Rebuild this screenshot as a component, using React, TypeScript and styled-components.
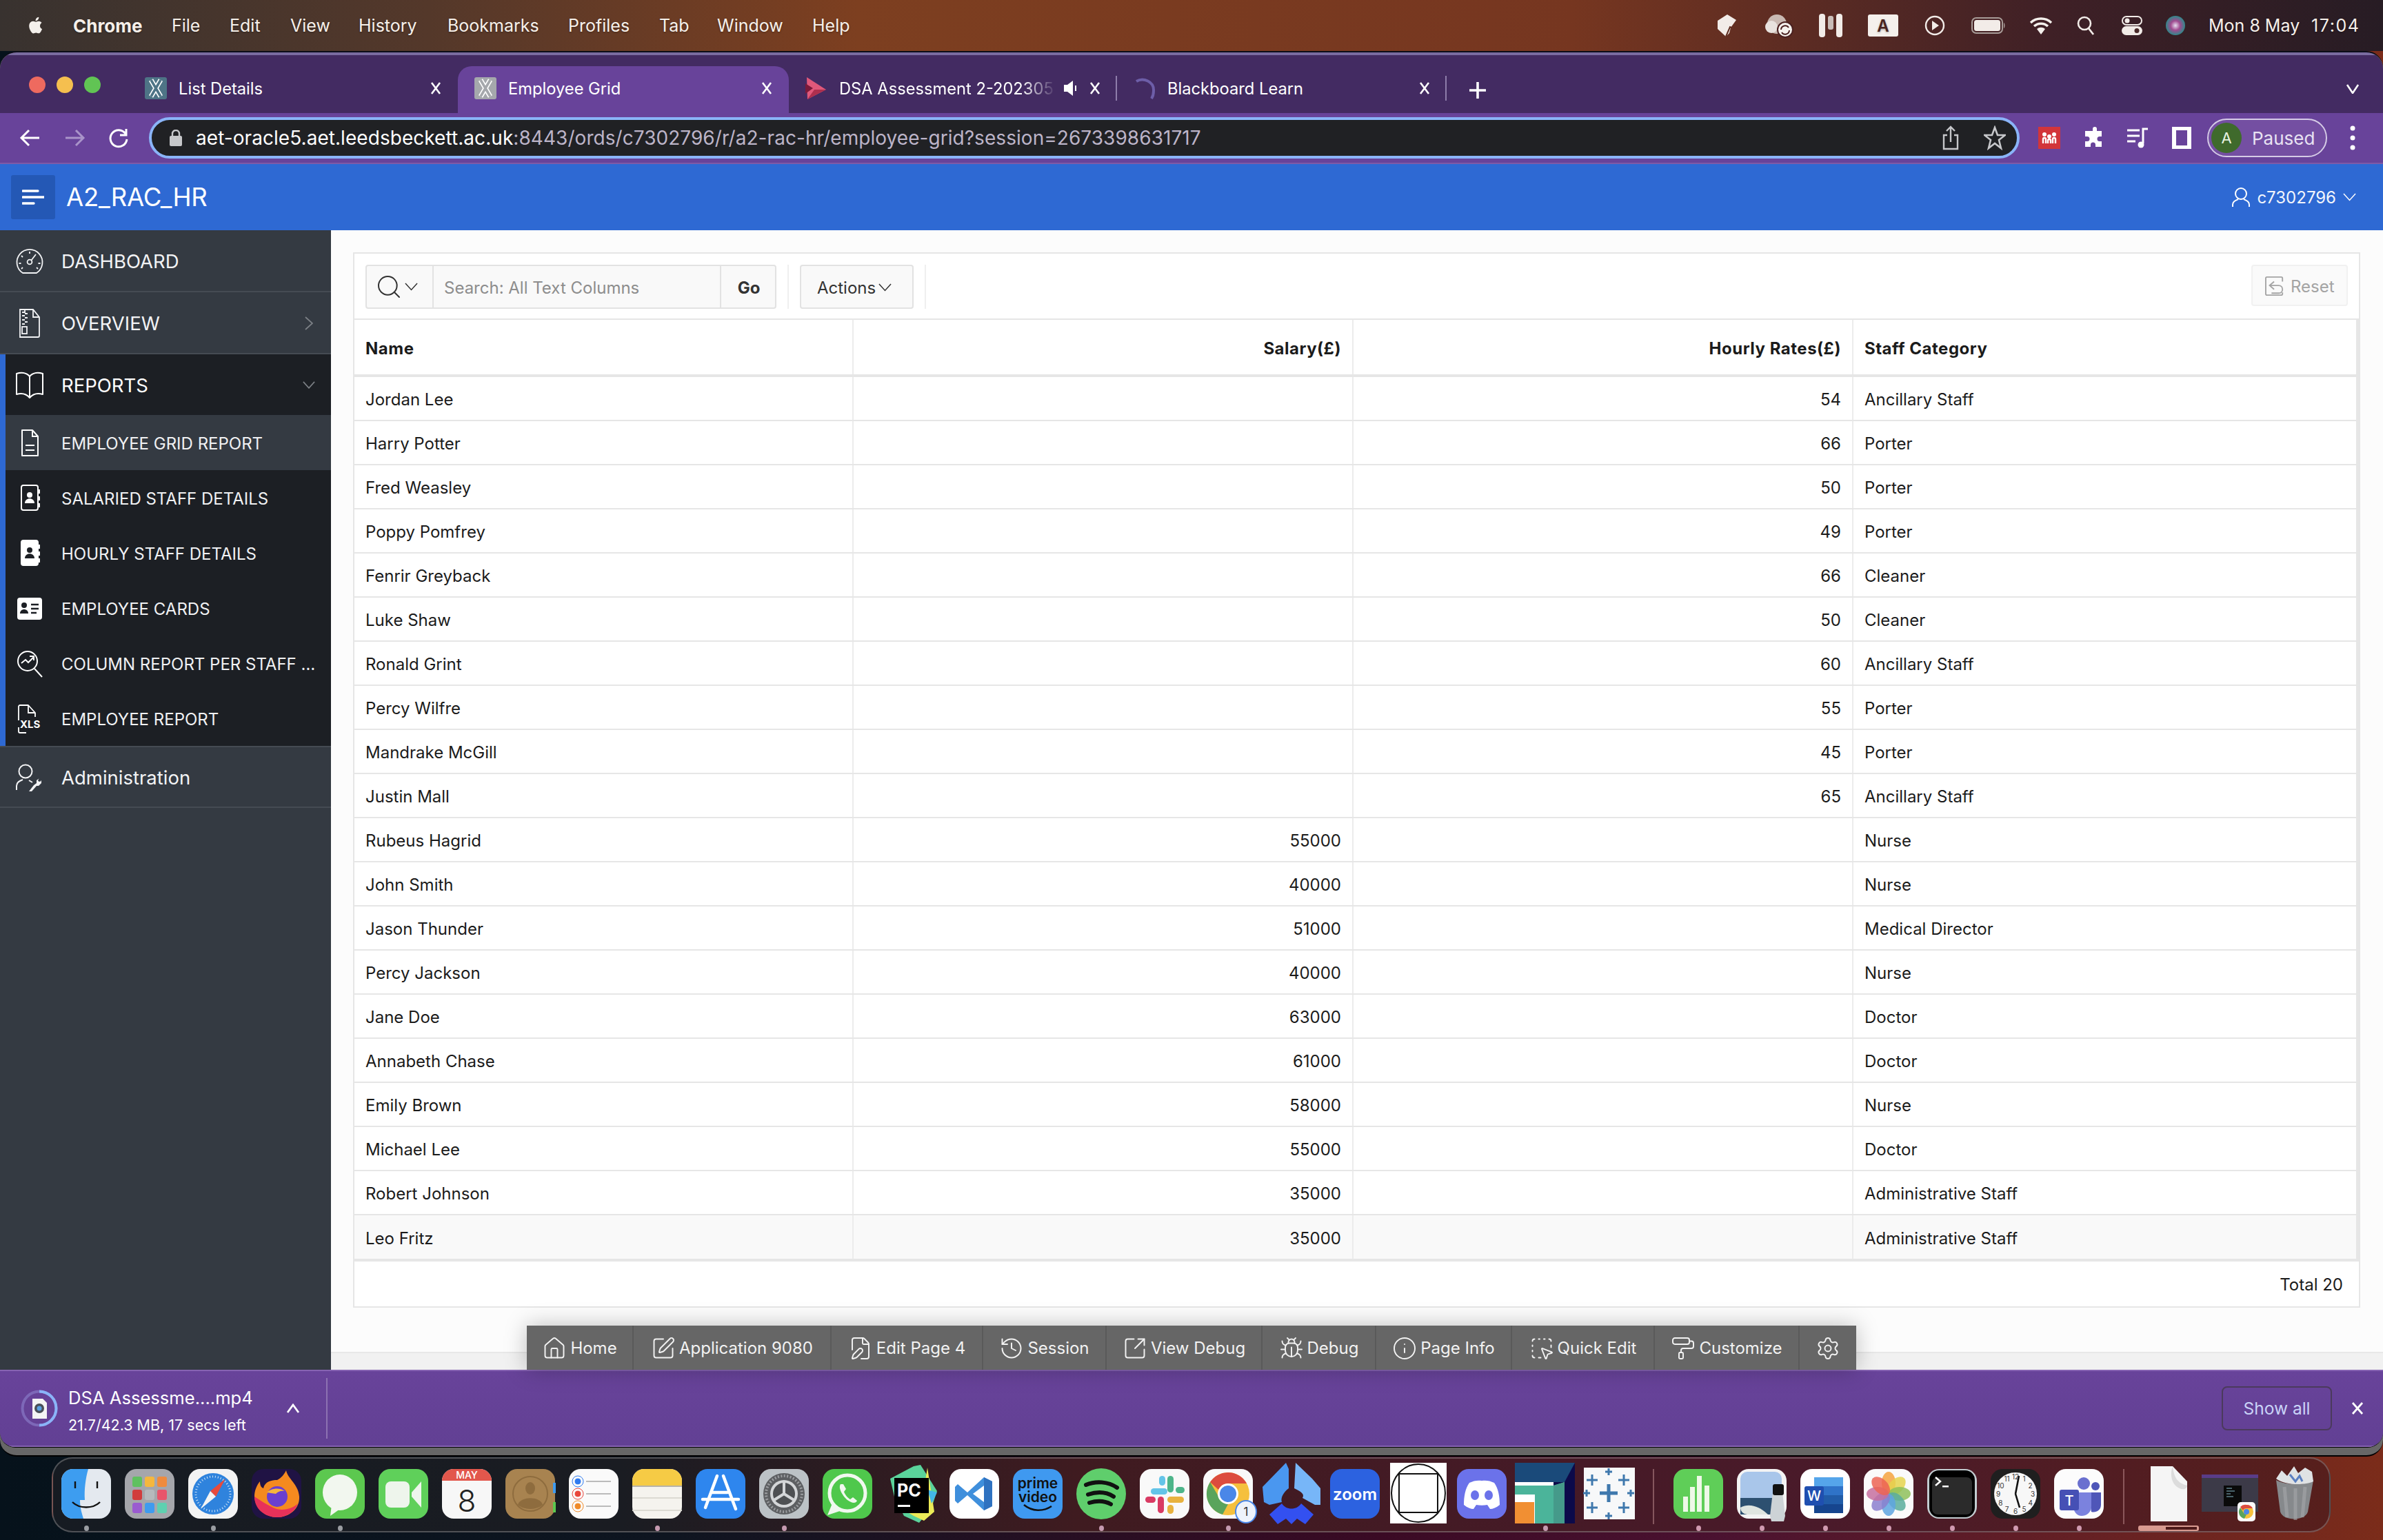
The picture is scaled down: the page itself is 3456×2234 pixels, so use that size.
import React from "react";
import styled, { createGlobalStyle } from "styled-components";
import {
  Home, SquarePen, FilePen, History, SquareArrowOutUpRight, Bug, Info,
  SquareDashedMousePointer, PaintRoller, Settings, Search,
} from "lucide-react";

const Global = createGlobalStyle`
  html, body { margin: 0; padding: 0; width: 3456px; height: 2234px; overflow: hidden; }
  body { font-family: Inter, "Liberation Sans", sans-serif; }
  * { box-sizing: border-box; }
`;

const Screen = styled.div`
  width: 3456px; height: 2234px; display: flex; flex-direction: column; overflow: hidden;
  background: linear-gradient(90deg, #06121b 0%, #0e1520 28%, #3a0a24 58%, #4a1230 72%, #7b2c1a 100%);
`;

/* ---------- menu bar ---------- */
const MenuBar = styled.div`
  height: 74px; flex: none; display: flex; align-items: center; color: #f6f0ea; font-size: 25px;
  padding-left: 38px; text-shadow: 0 1px 3px rgba(0,0,0,.35);
  background: linear-gradient(90deg, #38322f 0%, #54382a 18%, #7d3f20 36%, #763620 66%, #3f2026 86%, #271c24 100%);
`;
const MenuLabel = styled.span<{ $w: number; $bold?: boolean }>`
  width: ${p => p.$w}px; flex: none; font-weight: ${p => (p.$bold ? 700 : 400)}; white-space: nowrap;
  font-size: ${p => (p.$bold ? 26 : 25)}px;
`;
const Apple = styled.svg`width: 28px; height: 32px; margin-right: 40px; flex: none;`;
const MenuSpacer = styled.div`flex: 1;`;
const StatusCell = styled.div<{ $w: number }>`
  width: ${p => p.$w}px; flex: none; display: flex; justify-content: center; align-items: center;
`;
const Clock = styled.span<{ $w: number; $wide?: boolean }>`
  width: ${p => p.$w}px; flex: none; font-size: 25px; white-space: nowrap;
  ${p => p.$wide && `letter-spacing: 1.6px;`}
  ${p => !p.$wide && `margin-left: 22px;`}
`;

/* ---------- browser window ---------- */
const Shell = styled.div`
  height: 2039px; flex: none; background: #676767; border-radius: 24px;
  border-top: 2px solid #0b0d18; border-bottom: 2px solid #000; overflow: hidden;
`;
const Chrome = styled.div`
  height: 2024px; display: flex; flex-direction: column; border-radius: 24px 24px 22px 22px; overflow: hidden;
  border-bottom: 1px solid #000;
`;
const TabStrip = styled.div`
  height: 88px; flex: none; background: #432b62; border-top: 4px solid #7a6ca0; display: flex; align-items: flex-end;
  padding-left: 186px; position: relative; color: #fff; font-size: 23.7px;
`;
const Lights = styled.div`
  position: absolute; left: 42px; top: 31px; display: flex; gap: 16px;
`;
const Light = styled.span<{ $c: string }>`width: 24px; height: 24px; border-radius: 50%; background: ${p => p.$c};`;
const Tab = styled.div<{ $w: number; $active?: boolean; $sep?: boolean }>`
  width: ${p => p.$w}px; height: 68px; flex: none; display: flex; align-items: center; padding: 0 24px 4px;
  position: relative; border-radius: 20px 20px 0 0;
  background: ${p => (p.$active ? "#68439a" : "transparent")};
  ${p => p.$sep && `
    &::after { content: ""; position: absolute; right: 0; top: 14px; height: 36px; width: 2px; background: #8e7daa; }`}
`;
const TabIcon = styled.svg`width: 32px; height: 32px; flex: none; margin-right: 17px;`;
const TabTitle = styled.span<{ $fade?: boolean }>`
  flex: 1; white-space: nowrap; overflow: hidden; min-width: 0;
  ${p => p.$fade && `-webkit-mask-image: linear-gradient(90deg, #000 84%, transparent 100%); margin-right: 10px;`}
`;
const TabX = styled.svg`width: 16px; height: 18px; flex: none; margin-left: 16px;`;
const Plus = styled.svg`width: 26px; height: 26px; margin: 0 0 20px 32px;`;
const StripEnd = styled.svg`width: 20px; height: 14px; position: absolute; right: 34px; top: 42px;`;

const Toolbar = styled.div`
  height: 74px; flex: none; background: #68439a; border-bottom: 2px solid #7d5ba8; display: flex; align-items: center;
  padding-left: 28px; color: #fff;
`;
const NavBtn = styled.svg`width: 32px; height: 32px; margin-right: 32px; flex: none;`;
const UrlBar = styled.div`
  width: 2713px; height: 60px; flex: none; margin-left: -4px; border: 4px solid #8ab4f8; border-radius: 30px; background: #202124;
  display: flex; align-items: center; padding: 0 16px 0 26px; font-size: 28px; color: #bcb4c8; letter-spacing: .05px;
`;
const UrlHost = styled.span`color: #fff;`;
const UrlText = styled.div`flex: 1; margin-left: 20px; white-space: nowrap;`;
const UrlIcon = styled.svg`width: 32px; height: 36px; flex: none; margin-left: 32px;`;
const Ext = styled.svg`flex: none; width: 32px; height: 32px;`;
const ExtRow = styled.div`display: flex; align-items: center; gap: 32px; margin-left: 27px; flex: none;`;
const Paused = styled.div`
  width: 174px; height: 56px; flex: none; margin-left: 21px; border: 2px solid #d5cbe6; border-radius: 28px; background: #744fa2;
  display: flex; align-items: center; padding-left: 4px; gap: 15px; font-size: 26px; color: #e8e2f2;
`;
const Avatar = styled.span`
  width: 44px; height: 44px; border-radius: 50%; background: #3f6a2c; color: #e8f2e0; font-size: 22px;
  display: flex; align-items: center; justify-content: center;
`;
const Kebab = styled.svg`width: 10px; height: 36px; margin-left: 32px; flex: none;`;

/* ---------- APEX header ---------- */
const AppHeader = styled.div`
  height: 96px; flex: none; background: #2e69d3; display: flex; align-items: center; padding: 0 39px 0 16px; color: #fff;
`;
const MenuBtn = styled.div`
  width: 64px; height: 64px; background: #2458b5; border-radius: 3px; display: flex; align-items: center; justify-content: center;
`;
const AppTitle = styled.div`font-size: 36.5px; margin-left: 16px; flex: 1; letter-spacing: -.2px;`;
const UserBox = styled.div`display: flex; align-items: center; font-size: 24px; gap: 10px; color: #f1f5fc;`;

/* ---------- chevrons ---------- */
const ChevDown = styled.svg<{ $w?: number }>`width: ${p => p.$w ?? 20}px; height: ${p => ((p.$w ?? 20) * 12) / 20}px; flex: none;`;
const ChevRight = styled.svg`width: 12px; height: 20px; flex: none;`;
const Down = ({ w, c = "currentColor", sw = 1.6 }: { w?: number; c?: string; sw?: number }) => (
  <ChevDown $w={w} viewBox="0 0 20 12"><path d="M1 1l9 10 9-10" fill="none" stroke={c} strokeWidth={sw} /></ChevDown>
);

/* ---------- body ---------- */
const Body = styled.div`flex: 1; display: flex; min-height: 0; position: relative;`;
const Sidebar = styled.div`width: 480px; flex: none; background: #343a42; display: flex; flex-direction: column;`;
const NavTop = styled.div<{ $h?: number; $top?: boolean }>`
  height: ${p => p.$h ?? 90}px; flex: none; display: flex; align-items: center; padding: 1px 26px 0 22px;
  color: #f2f3f5; font-size: 27.5px; border-bottom: 2px solid #454b53;
  ${p => p.$top && `border-top: 2px solid #454b53;`}
`;
const NavGroup = styled.div`background: #1c1f24; border-left: 8px solid #2e69d3; display: flex; flex-direction: column;`;
const NavHead = styled.div`
  height: 88px; display: flex; align-items: center; padding: 1px 23px 0 14px; color: #fff; font-size: 27.5px;
`;
const NavSub = styled.div<{ $on?: boolean }>`
  height: 80px; display: flex; align-items: center; padding: 2px 0 0 14px; font-size: 24px; color: #f0f1f3; white-space: nowrap;
  background: ${p => (p.$on ? "#343a42" : "transparent")};
`;
const NavIcon = styled.svg`width: 42px; height: 42px; flex: none; margin-right: 25px;`;
const NavLabel = styled.span`flex: 1;`;

const Main = styled.div`flex: 1; background: #fcfcfc; display: flex; flex-direction: column; padding-top: 32px; min-width: 0;`;
const Grid = styled.div`
  margin: 0 33px 0 32px; background: #fff; border: 2px solid #e6e6e6; flex: none; display: flex; flex-direction: column;
`;
const GridBar = styled.div`
  height: 96px; flex: none; display: flex; align-items: flex-start; padding: 16px 16px 0 16px; border-bottom: 2px solid #e6e6e6;
`;
const SearchGroup = styled.div`
  width: 596px; height: 64px; display: flex; background: #f9f9f9; border: 2px solid #e2e2e2; border-radius: 4px; font-size: 24px;
`;
const SearchBtn = styled.div`
  width: 97px; flex: none; border-right: 2px solid #e2e2e2; display: flex; align-items: center; padding-left: 12px; gap: 3px; color: #333;
`;
const SearchHint = styled.div`flex: 1; display: flex; align-items: center; padding: 2px 0 0 15px; color: #8d8d8d;`;
const GoBtn = styled.div`
  width: 80px; flex: none; border-left: 2px solid #e2e2e2; display: flex; align-items: center; justify-content: center; padding: 2px 0 0 2px; font-weight: 700; color: #333;
`;
const BarSep = styled.div`width: 2px; height: 64px; background: #efefef; flex: none; margin: 0 16px;`;
const ActionsBtn = styled.div`
  width: 165px; height: 64px; flex: none; background: #f9f9f9; border: 2px solid #e2e2e2; border-radius: 4px; font-size: 24px; color: #333;
  display: flex; align-items: center; padding: 2px 0 0 23px; gap: 4px;
`;
const BarSpacer = styled.div`flex: 1;`;
const ResetBtn = styled.div`
  width: 140px; height: 60px; flex: none; background: #fafafa; border: 2px solid #f1f1f1; border-radius: 4px; font-size: 24px; color: #a4a4a4;
  display: flex; align-items: center; padding: 2px 0 0 18px; gap: 9px;
`;
const ResetIcon = styled.svg`width: 28px; height: 28px; flex: none;`;
const Table = styled.div`border-right: 4px solid #e6e6e6; display: flex; flex-direction: column;`;
const Row = styled.div<{ $head?: boolean; $last?: boolean }>`
  display: grid; grid-template-columns: 724px 725px 725px 1fr; flex: none;
  height: ${p => (p.$head ? 83 : p.$last ? 67 : 64)}px;
  border-bottom: ${p => (p.$head || p.$last ? 4 : 2)}px solid #e6e6e6;
  background: ${p => (p.$last ? "#f9f9f9" : "#fff")};
  font-size: 24px; color: #1b1b1b; font-weight: ${p => (p.$head ? 700 : 400)};
  letter-spacing: ${p => (p.$head ? ".5px" : "0")};
`;
const Cell = styled.div<{ $right?: boolean; $end?: boolean }>`
  display: flex; align-items: center; padding: 3px 16px 0 16px; justify-content: ${p => (p.$right ? "flex-end" : "flex-start")};
  ${p => !p.$end && `border-right: 2px solid #ececec;`}
`;
const GridFooter = styled.div`
  height: 65px; flex: none; display: flex; align-items: center; justify-content: flex-end; padding: 2px 23px 0 0; font-size: 24px; color: #1b1b1b;
`;
const MainSpacer = styled.div`flex: 1;`;
const PageFoot = styled.div`height: 26px; flex: none; background: #f1f1f1; border-top: 2px solid #e8e8e8;`;

const DevBar = styled.div`
  position: absolute; left: 764px; bottom: 0; height: 64px; display: flex; background: #666; color: #f2f2f2; font-size: 24px;
  box-shadow: 0 0 32px rgba(0,0,0,.25);
`;
const DevItem = styled.div<{ $w: number }>`
  width: ${p => p.$w}px; flex: none; display: flex; align-items: center; justify-content: center; gap: 5px; padding-top: 1px;
  border-right: 2px solid #5a5a5a; white-space: nowrap;
  &:last-child { border-right: 0; }
`;

/* ---------- download shelf ---------- */
const Shelf = styled.div`
  height: 112px; flex: none; display: flex; align-items: center; color: #fff; padding-left: 30px; padding-right: 28px;
  background: linear-gradient(180deg, #68439a 0%, #624094 100%); border-top: 2px solid #8663b2; border-bottom: 2px solid #8663b2;
`;
const Ring = styled.svg`width: 54px; height: 54px; flex: none; margin-right: 15px;`;
const FileBox = styled.div`width: 290px; flex: none; display: flex; flex-direction: column; gap: 10px; padding-top: 5px;`;
const FileName = styled.div`font-size: 25.6px; line-height: 32px;`;
const FileInfo = styled.div`font-size: 21.5px; line-height: 26px;`;
const Caret = styled.svg`width: 20px; height: 14px; flex: none; margin-left: 26px;`;
const ShelfSep = styled.div`width: 2px; height: 88px; flex: none; background: #8d72b2; margin-left: 38px;`;
const ShelfSpacer = styled.div`flex: 1;`;
const ShowAll = styled.div`
  width: 160px; height: 64px; flex: none; border: 2px solid #4b3a5c; border-radius: 8px; display: flex; align-items: center; justify-content: center;
  font-size: 24.5px; color: #c9d3f7;
`;
const ShelfX = styled.svg`width: 18px; height: 20px; flex: none; margin-left: 28px;`;

/* ---------- dock ---------- */
const Dock = styled.div`
  width: 3305px; height: 109px; flex: none; margin: 1px 0 0 75px; border: 2px solid rgba(170,170,170,.38); border-radius: 30px;
  display: flex; padding: 5px 2px 0;
  background: linear-gradient(90deg, #161b22 0%, #1a1c22 25%, #3f1b20 45%, #451a26 65%, #4a1a2a 78%, #571f1c 100%);
`;
const DockCell = styled.div`width: 92px; flex: none; display: flex; flex-direction: column; align-items: center;`;
const DockArt = styled.svg`width: 92px; height: 92px; flex: none; overflow: visible;`;
const Dot = styled.span<{ $on?: boolean; $tone?: string }>`
  width: 7px; height: 8px; border-radius: 50%; background: ${p => (p.$on ? p.$tone ?? "#9a9da2" : "transparent")}; flex: none;
`;
const DockSep = styled.div`width: 2px; height: 80px; flex: none; margin: 10px 18px 0; background: rgba(220,170,170,.42);`;
const DocBar = styled.div`
  width: 88px; height: 8px; border-radius: 3px; background: #d89a90; display: flex; justify-content: flex-end; padding: 2px 3px 2px 40px; flex: none;
`;
const DocBarFill = styled.span`flex: 1; background: #4e1a1a;`;

/* ---------- data ---------- */
const MENU: [string, number, boolean?][] = [
  ["Chrome", 143, true], ["File", 84], ["Edit", 88], ["View", 99], ["History", 129], ["Bookmarks", 175],
  ["Profiles", 132], ["Tab", 84], ["Window", 138], ["Help", 80],
];

const ROWS: [string, string, string, string][] = [
  ["Jordan Lee", "", "54", "Ancillary Staff"],
  ["Harry Potter", "", "66", "Porter"],
  ["Fred Weasley", "", "50", "Porter"],
  ["Poppy Pomfrey", "", "49", "Porter"],
  ["Fenrir Greyback", "", "66", "Cleaner"],
  ["Luke Shaw", "", "50", "Cleaner"],
  ["Ronald Grint", "", "60", "Ancillary Staff"],
  ["Percy Wilfre", "", "55", "Porter"],
  ["Mandrake McGill", "", "45", "Porter"],
  ["Justin Mall", "", "65", "Ancillary Staff"],
  ["Rubeus Hagrid", "55000", "", "Nurse"],
  ["John Smith", "40000", "", "Nurse"],
  ["Jason Thunder", "51000", "", "Medical Director"],
  ["Percy Jackson", "40000", "", "Nurse"],
  ["Jane Doe", "63000", "", "Doctor"],
  ["Annabeth Chase", "61000", "", "Doctor"],
  ["Emily Brown", "58000", "", "Nurse"],
  ["Michael Lee", "55000", "", "Doctor"],
  ["Robert Johnson", "35000", "", "Administrative Staff"],
  ["Leo Fritz", "35000", "", "Administrative Staff"],
];

const DEV: [React.ElementType, string, number][] = [
  [Home, "Home", 155], [SquarePen, "Application 9080", 287], [FilePen, "Edit Page 4", 220],
  [History, "Session", 179], [SquareArrowOutUpRight, "View Debug", 226], [Bug, "Debug", 165],
  [Info, "Page Info", 197], [SquareDashedMousePointer, "Quick Edit", 207], [PaintRoller, "Customize", 210], [Settings, "", 82],
];

/* ---------- small drawings ---------- */
const X = () => <path d="M2 1 L14 17 M14 1 L2 17" stroke="#fff" strokeWidth="2.6" fill="none" />;
const ApexFav = ({ bg }: { bg: string }) => (
  <TabIcon viewBox="0 0 32 32">
    <rect width="32" height="32" rx="3" fill={bg} />
    <path d="M9 4 L23 28 M23 4 L9 28" stroke="#fff" strokeWidth="7" fill="none" />
    <path d="M9 4 L23 28 M23 4 L9 28" stroke={bg} strokeWidth="3.6" fill="none" />
  </TabIcon>
);

const Gauge = () => (
  <NavIcon viewBox="0 0 42 42" fill="none" stroke="#f2f3f5" strokeWidth="1.8">
    <path d="M11 38 A18.5 18.5 0 1 1 31 38 Z" strokeLinejoin="round" />
    <circle cx="21" cy="22" r="3.4" />
    <path d="M23.5 19.5 L30 11" />
    <path d="M21 7v3M9 13l2 2M5.5 24h3M33.500 24h3M9 32l2-2M33 32l-2-2" />
  </NavIcon>
);
const ZipDoc = () => (
  <NavIcon viewBox="0 0 42 42" fill="none" stroke="#f2f3f5" strokeWidth="1.8">
    <path d="M7 1h19l9 11v27a2 2 0 0 1-2 2H7Z" />
    <path d="M26 2v10h9" />
    <path d="M14 2v3h-4M14 7h4M14 10h-4M14 13h4M14 16h-4M14 19h4M14 22h-4" />
    <rect x="10" y="26" width="7" height="10" />
  </NavIcon>
);
const Book = () => (
  <NavIcon viewBox="-2 0 42 42" fill="none" stroke="#fff" strokeWidth="2">
    <path d="M19 8 C14 2 6 2 0 4 V34 C7 32 14 33 19 39 C24 33 31 32 38 34 V4 C32 2 24 2 19 8 Z" strokeLinejoin="round" />
    <path d="M19 8V39" />
  </NavIcon>
);
const DocSmall = () => (
  <NavIcon viewBox="0 0 42 42" fill="none" stroke="#fff" strokeWidth="2">
    <path d="M10 2h15l8 9v28H10Z" strokeLinejoin="round" />
    <path d="M25 2v9h8M15 24h13M15 31h13" />
  </NavIcon>
);
const Contact = ({ solid }: { solid?: boolean }) => (
  <NavIcon viewBox="0 0 42 42" fill="none" stroke="#fff" strokeWidth="2">
    <rect x="9" y="2" width="24" height="36" rx="3" fill={solid ? "#fff" : "none"} />
    <circle cx="21" cy="16" r="4" fill={solid ? "#1c1f24" : "#fff"} stroke="none" />
    <path d="M14 28c0-9 14-9 14 0Z" fill={solid ? "#1c1f24" : "#fff"} stroke="none" />
    <path d="M35 8v6M35 18v6M35 28v6" />
  </NavIcon>
);
const Card = () => (
  <NavIcon viewBox="0 0 42 42">
    <rect x="3" y="5" width="36" height="32" rx="4" fill="#fff" />
    <circle cx="13" cy="16" r="4" fill="#1c1f24" />
    <path d="M7 28c0-8 12-8 12 0Z" fill="#1c1f24" />
    <path d="M23 15h11M23 21h11M23 27h8" stroke="#1c1f24" strokeWidth="2.4" />
  </NavIcon>
);
const Magnify = () => (
  <NavIcon viewBox="0 0 42 42" fill="none" stroke="#fff" strokeWidth="2">
    <circle cx="18" cy="17" r="14" />
    <path d="M28 28 L39 40" />
    <path d="M9 20l6-5 4 4 8-8M21 10h6v6" />
  </NavIcon>
);
const Xls = () => (
  <NavIcon viewBox="0 0 42 42" fill="none" stroke="#fff" strokeWidth="1.8">
    <path d="M5 23V3a2 2 0 0 1 2-2h12l10 11v6" strokeLinejoin="round" />
    <path d="M19 2v10h10" />
    <path d="M5 33v6a2 2 0 0 0 2 2h9" />
    <text x="7" y="34" fontSize="15" fontWeight="700" fill="#fff" stroke="none" fontFamily="Inter, sans-serif">XLS</text>
  </NavIcon>
);
const AdminIcon = () => (
  <NavIcon viewBox="0 0 42 42" fill="none" stroke="#f2f3f5" strokeWidth="2">
    <circle cx="15" cy="12" r="9.5" />
    <path d="M2 39v-6c0-5 4-7 9-9M20 25l5 3" />
    <path d="M35 22l-4 3v4l-4 3 -7 9h4l7-8h3l4-4v-4l-2 2-3-1 1-3Z" fill="#f2f3f5" stroke="none" />
  </NavIcon>
);

/* ---------- dock art ---------- */
const Tile = ({ fill, x = 10, y = 10, w = 72, h = 72 }: { fill: string; x?: number; y?: number; w?: number; h?: number }) => (
  <rect x={x} y={y} width={w} height={h} rx={17} fill={fill} />
);

const DOCK: [React.ReactNode, boolean?][] = [
  [<g key="f"><Tile fill="#e4e9ef" /><path d="M27 10h22c-4 14-6 30-5 45h-7c0 12 3 20 5 27H27a17 17 0 0 1-17-17V27a17 17 0 0 1 17-17Z" fill="#3d9df0" /><path d="M30 28v10M62 28v10M26 58c10 10 30 10 40 0" stroke="#111" strokeWidth="2.4" fill="none" /></g>, true],
  [<g key="l"><Tile fill="#a5a6ab" />{[["#5fc15f", "#f5b73d", "#ef8b3d"], ["#d13c3c", "#b6b9bc", "#e8556b"], ["#9a5bd0", "#3f9bef", "#5fd0b0"]].map((r, j) => r.map((c, i) => <rect key={i + "" + j} x={21 + i * 18} y={21 + j * 19} width={14} height={15} rx={3} fill={c} />))}</g>],
  [<g key="s"><Tile fill="#f3f3f3" /><circle cx="46" cy="46" r="30" fill="#2f83dd" /><circle cx="46" cy="46" r="25" fill="none" stroke="#cfe4f7" strokeWidth="3" strokeDasharray="1 3" /><path d="M64 24 L50 50 L42 42 Z" fill="#e84a3c" /><path d="M28 68 L50 50 L42 42 Z" fill="#f4f4f4" /></g>, true],
  [<g key="ff"><Tile fill="#201344" /><path d="M60 12c2 12 18 20 19 38 1 18-15 30-32 30S15 68 14 50c0-8 3-16 8-22 0 6 2 9 5 10 2-10 12-12 20-12 6-3 10-8 13-14Z" fill="#f58a1f" /><path d="M14 50c0 18 15 30 33 30 14 0 26-8 30-20-8 8-24 12-36 6-10-5-18-10-27-16Z" fill="#e8315a" /><circle cx="47" cy="50" r="15" fill="#6a3fd0" /><path d="M32 44c6-6 18-8 26-2-6-1-10 1-13 4-5-1-9-1-13-2Z" fill="#f5b63d" /></g>],
  [<g key="m"><Tile fill="#5cc84f" /><ellipse cx="46" cy="44" rx="25" ry="26" fill="#f2f7ef" /><path d="M34 62 L32 78 L46 68Z" fill="#f2f7ef" /></g>, true],
  [<g key="ft"><Tile fill="#5fd05a" /><rect x="20" y="28" width="35" height="38" rx="8" fill="#eef5ec" /><path d="M58 44 L72 28 V66 L58 50Z" fill="#eef5ec" /></g>],
  [<g key="c"><Tile fill="#f7f7f7" /><path d="M27 10h38a17 17 0 0 1 17 17v0H10v0a17 17 0 0 1 17-17Z" fill="#e2574c" /><text x="46" y="24" textAnchor="middle" fontSize="14" fontWeight="500" fill="#fff" fontFamily="Inter, sans-serif">MAY</text><text x="46" y="72" textAnchor="middle" fontSize="44" fontWeight="300" fill="#222" fontFamily="Inter, sans-serif">8</text></g>],
  [<g key="ct"><Tile fill="#a88350" /><rect x="79" y="30" width="4" height="15" fill="#3f9bef" /><rect x="79" y="58" width="4" height="15" fill="#5cc84f" /><circle cx="46" cy="46" r="25" fill="none" stroke="#8e6c3e" strokeWidth="2" /><ellipse cx="46" cy="38" rx="7" ry="9" fill="#8e6c3e" /><path d="M28 62c3-13 33-13 36 0-10 8-26 8-36 0Z" fill="#8e6c3e" /></g>],
  [<g key="r"><Tile fill="#fafafa" />{[["#2f7bf0", 28], ["#e8463c", 46], ["#ef8b2a", 64]].map(([c, y]) => <g key={String(y)}><circle cx="23" cy={y as number} r="5" fill={c as string} stroke="#fff" strokeWidth="1" /><circle cx="23" cy={y as number} r="8" fill="none" stroke={c as string} strokeWidth="1" /><rect x="35" y={(y as number) - 1} width="36" height="2" fill="#bbb" /></g>)}</g>],
  [<g key="n"><Tile fill="#f5f3ee" /><path d="M27 10h38a17 17 0 0 1 17 17v7H10v-7a17 17 0 0 1 17-17Z" fill="#f6cb45" /><rect x="10" y="34" width="72" height="2" fill="#b7b3a8" /><rect x="10" y="51" width="72" height="2" fill="#dcdad2" /><rect x="10" y="69" width="72" height="2" fill="#dcdad2" /></g>, true],
  [<g key="as"><Tile fill="#2e86ee" /><path d="M50 20 L68 68M41 20 L24 66M20 54 H72M34 44h22" stroke="#fff" strokeWidth="4.5" strokeLinecap="round" fill="none" /></g>],
  [<g key="st"><Tile fill="#bcc2c6" /><circle cx="46" cy="46" r="30" fill="#5d5f62" /><circle cx="46" cy="46" r="26" fill="none" stroke="#9a9c9f" strokeWidth="4" strokeDasharray="2 2.500" /><circle cx="46" cy="46" r="20" fill="#d4d6d8" /><circle cx="46" cy="46" r="16" fill="#4e5053" /><path d="M46 46V28M46 46L30 56M46 46l16 10" stroke="#d4d6d8" strokeWidth="4" /></g>, true],
  [<g key="wa"><Tile fill="#4fc84c" /><circle cx="46" cy="45" r="26" fill="none" stroke="#f1f8ef" strokeWidth="5" /><path d="M24 60l-7 17 18-6Z" fill="#f1f8ef" /><path d="M36 32c-4 6 4 18 10 23 5 4 12 6 14 1l-6-5-4 3c-4-2-8-8-9-11l3-4-4-7Z" fill="#f1f8ef" /></g>],
  [<g key="pc"><path d="M16 24 L50 6 L60 4 L84 42 L76 66 L58 88 L36 78 L22 50Z" fill="#5ad39b" /><path d="M70 8 L60 70 L40 72 L50 78 L65 85 L80 72Z" fill="#eceb57" /><path d="M70 40 L84 44 L76 60Z" fill="#43b7e8" /><rect x="22" y="23" width="50" height="51" fill="#000" /><text x="26" y="50" fontSize="25" fontWeight="700" fill="#fff" fontFamily="Inter, sans-serif">PC</text><rect x="27" y="62" width="18" height="3" fill="#fff" /></g>],
  [<g key="vs"><Tile fill="#fff" /><path d="M60 22 L72 28 V64 L60 70 L36 48 L22 60 L18 56 V36 L22 32 L36 44Z" fill="#3f8fdc" /><path d="M60 34 L44 46 L60 58Z" fill="#fff" /><path d="M60 22 L72 28 V64 L60 70Z" fill="#2f72c0" /></g>],
  [<g key="pr"><Tile fill="#3f99f0" /><text x="46" y="38" textAnchor="middle" fontSize="21" fontWeight="600" fill="#111" fontFamily="Inter, sans-serif">prime</text><text x="46" y="58" textAnchor="middle" fontSize="21" fontWeight="600" fill="#111" fontFamily="Inter, sans-serif">video</text><path d="M26 62c12 10 28 10 40 2" stroke="#111" strokeWidth="2.6" fill="none" /></g>],
  [<g key="sp"><ellipse cx="46" cy="46" rx="36" ry="37" fill="#5fce6c" /><path d="M24 33c14-6 32-5 45 4M27 47c12-4 26-4 37 3M29 59c10-3 22-3 31 2" stroke="#111" strokeWidth="6" strokeLinecap="round" fill="none" /></g>, true],
  [<g key="sl"><Tile fill="#f9f9f9" /><rect x="50" y="20" width="9" height="24" rx="4.5" fill="#4db58a" /><rect x="26" y="38" width="24" height="9" rx="4.5" fill="#64c4e8" /><rect x="36" y="50" width="9" height="24" rx="4.5" fill="#d93a63" /><rect x="50" y="50" width="24" height="9" rx="4.5" fill="#e8b23f" /><rect x="38" y="20" width="9" height="14" rx="4.5" fill="#64c4e8" /><rect x="18" y="50" width="15" height="9" rx="4.5" fill="#d93a63" /><rect x="62" y="36" width="13" height="9" rx="4.5" fill="#4db58a" /><rect x="50" y="62" width="9" height="13" rx="4.5" fill="#e8b23f" /></g>],
  [<g key="ch"><Tile fill="#f9f9f9" /><circle cx="46" cy="46" r="31" fill="#f5c03d" /><path d="M46 15a31 31 0 0 1 27 16H46a15 15 0 0 0-14 9L20 29A31 31 0 0 1 46 15Z" fill="#dc4c3e" /><path d="M20 29l14 24a15 15 0 0 0 12 8L38 76A31 31 0 0 1 20 29Z" fill="#5aa45c" /><circle cx="46" cy="46" r="15" fill="#fff" /><circle cx="46" cy="46" r="12" fill="#4a87e8" /><ellipse cx="72" cy="72" rx="15" ry="16" fill="#eef3fb" stroke="#4a87e8" strokeWidth="2" /><text x="72" y="78" textAnchor="middle" fontSize="17" fill="#333" fontFamily="Inter, sans-serif">1</text></g>, true],
  [<g key="bl"><path d="M38 1 L42 10 V38 C34 44 30 52 32 58 L14 62 L6 58 L4 36 Z" fill="#4a97f0" /><path d="M52 1 L76 24 L88 38 V62 L80 62 L62 52 C66 46 58 42 50 38Z" fill="#77b6f8" /><path d="M32 60 C38 70 54 70 60 60 L78 76 L66 90 L54 82 L46 90 L38 82 L26 90 L14 76Z" fill="#3350f0" /></g>],
  [<g key="zm"><Tile fill="#2c62e0" /><text x="46" y="55" textAnchor="middle" fontSize="24" fontWeight="600" fill="#fff" fontFamily="Inter, sans-serif">zoom</text></g>],
  [<g key="bx"><rect x="5" y="1" width="82" height="88" fill="#fff" /><ellipse cx="46" cy="45" rx="39" ry="42" fill="none" stroke="#111" strokeWidth="2" /><rect x="18" y="17" width="56" height="56" fill="none" stroke="#111" strokeWidth="2" /></g>],
  [<g key="dc"><Tile fill="#6b72ea" /><path d="M28 30c6-3 12-4 18-3 6-1 12 0 18 3 6 8 8 20 8 32-5 4-10 6-14 6l-4-6c-5 1-11 1-16 0l-4 6c-4 0-9-2-14-6 0-12 2-24 8-32Z" fill="#fff" /><ellipse cx="36" cy="48" rx="6" ry="7" fill="#6b72ea" /><ellipse cx="56" cy="48" rx="6" ry="7" fill="#6b72ea" /></g>],
  [<g key="tl"><rect x="2" y="1" width="87" height="88" fill="#0c0a4a" /><path d="M2 1H89L74 29H2Z" fill="#1a4a7a" /><rect x="2" y="29" width="56" height="60" fill="#fff" /><path d="M2 34H58L74 29V89H31V47H2Z" fill="#4bb49a" /><path d="M58 34L74 29V89H58Z" fill="#459a8a" /><rect x="2" y="58" width="28" height="31" fill="#f18f33" /></g>, true],
  [<g key="tb"><rect x="10" y="8" width="74" height="75" fill="#f7f8f9" />{[[46, 45, 13], [22, 26, 8], [68, 26, 8], [22, 66, 8], [68, 66, 8], [46, 14, 5], [46, 78, 5], [14, 45, 5], [78, 45, 5]].map(([x, y, r]) => <path key={x + "-" + y} d={`M${x - r} ${y}H${x + r}M${x} ${y - r}V${y + r}`} stroke="#3f78ad" strokeWidth={r > 10 ? 5 : 3} />)}</g>],
];

const DOCK2: [React.ReactNode, boolean?][] = [
  [<g key="nm"><Tile fill="#5fce58" /><rect x="24" y="50" width="7" height="22" fill="#eef9e8" /><rect x="34" y="36" width="7" height="36" fill="#eef9e8" /><rect x="44" y="20" width="7" height="52" fill="#eef9e8" /><rect x="55" y="34" width="7" height="38" fill="#eef9e8" /></g>],
  [<g key="pv"><Tile fill="#f3f3f3" /><rect x="15" y="14" width="60" height="62" rx="10" fill="#a9c6ea" /><path d="M15 52h60v24H15Z" fill="#2d5070" /><path d="M15 66c14-8 30 0 40 10H25a10 10 0 0 1-10-10Z" fill="#dfe5e0" /><path d="M62 44h14l4 34-2 8H60l-2-8Z" fill="#cdd3d6" /><rect x="62" y="32" width="16" height="16" rx="3" fill="#111" /></g>],
  [<g key="wd"><Tile fill="#fff" /><path d="M30 22H72V74H30Z" fill="#2f73c8" /><rect x="30" y="22" width="42" height="13" fill="#55a5ea" /><rect x="30" y="48" width="42" height="13" fill="#215ca8" /><rect x="30" y="61" width="42" height="13" fill="#16458e" /><rect x="16" y="35" width="28" height="28" rx="3" fill="#1f4fb0" /><text x="30" y="56" textAnchor="middle" fontSize="20" fill="#fff" fontWeight="500" fontFamily="Inter, sans-serif">W</text></g>],
  [<g key="ph"><Tile fill="#fafafa" />{["#f5a33f", "#e5d34d", "#8ec05a", "#5aad9c", "#5ea4e0", "#8b7fce", "#c66f9f", "#ec6454"].map((c, i) => <ellipse key={c} cx="46" cy="30" rx="10" ry="16" fill={c} opacity=".85" transform={`rotate(${i * 45} 46 46)`} />)}</g>],
  [<g key="tm"><Tile fill="#c2ccd0" /><rect x="13" y="12" width="66" height="68" rx="14" fill="#000" /><rect x="17" y="22" width="58" height="54" rx="8" fill="#2b2b2b" /><path d="M22 22l7 6-7 6" stroke="#fff" strokeWidth="2.5" fill="none" /><rect x="32" y="34" width="9" height="2.5" fill="#fff" /></g>],
  [<g key="ck"><Tile fill="#1f1f1f" /><circle cx="46" cy="46" r="31" fill="#f7f7f7" />{[...Array(12)].map((_, i) => { const a = ((i + 1) * Math.PI) / 6; return <text key={i} x={46 + 25 * Math.sin(a)} y={50 - 25 * Math.cos(a)} textAnchor="middle" fontSize="10" fill="#333" fontFamily="Inter, sans-serif">{i + 1}</text>; })}<path d="M46 46L51 20M46 46L52 66" stroke="#111" strokeWidth="2.6" /></g>],
  [<g key="tm2"><Tile fill="#fcfcfc" /><circle cx="53" cy="31" r="9" fill="#6a70cf" /><circle cx="70" cy="35" r="6" fill="#4f56b8" /><path d="M60 44h18v18c0 8-8 12-14 10Z" fill="#4f56b8" /><path d="M38 44h26v20c0 10-8 14-14 14-7 0-12-6-12-14Z" fill="#7b82de" /><rect x="18" y="40" width="28" height="30" rx="3" fill="#4650b5" /><text x="32" y="63" textAnchor="middle" fontSize="20" fill="#fff" fontWeight="500" fontFamily="Inter, sans-serif">T</text></g>],
];

const DOCK3: [React.ReactNode][] = [
  [<g key="dc"><path d="M20 6H52L73 28V86H20Z" fill="#f5f5f5" /><path d="M52 6C54 22 58 30 73 34 72 42 62 40 56 34 50 28 48 16 52 6Z" fill="#dcdcdc" /></g>],
  [<g key="sh"><rect x="2" y="18" width="82" height="54" fill="#3c3a48" /><rect x="2" y="18" width="82" height="5" fill="#5a3c88" /><rect x="34" y="34" width="26" height="30" fill="#0a0a0a" /><path d="M38 38h8M38 42h12M38 46h6M38 50h10" stroke="#8bc" strokeWidth="1" /><rect x="54" y="58" width="26" height="28" rx="5" fill="#fafafa" /><circle cx="67" cy="72" r="10" fill="#f5c03d" /><path d="M67 62a10 10 0 0 1 9 5H67a5 5 0 0 0-5 3l-4-5a10 10 0 0 1 9-3Z" fill="#dc4c3e" /><path d="M58 66l5 8a5 5 0 0 0 4 2l-3 6a10 10 0 0 1-6-16Z" fill="#5aa45c" /><circle cx="67" cy="72" r="4" fill="#4a87e8" /></g>],
  [<g key="tr"><path d="M18 26L24 72C28 86 60 86 64 72L72 26C62 34 30 34 18 26Z" fill="#86898c" /><path d="M30 36L34 80M46 38V84M60 36L56 80" stroke="#a6a8ab" strokeWidth="5" opacity=".6" /><path d="M18 24L26 12L34 20L44 6L50 16L60 8L70 14L72 28C60 34 30 34 18 24Z" fill="#dfe2e4" /><path d="M38 18l8 10 6-8 4 8" stroke="#5a7fc0" strokeWidth="3" fill="none" /></g>],
];

export default function App() {
  return (
    <Screen>
      <Global />
      <MenuBar>
        <Apple viewBox="0 0 28 32"><path d="M20 16.5c0-3 2.4-4.4 2.5-4.5-1.4-2-3.5-2.3-4.2-2.3-1.8-.2-3.5 1-4.4 1s-2.3-1-3.8-1C8 9.800 6.200 10.900 5.200 12.600c-2.100 3.600-.5 8.900 1.500 11.800 1 1.400 2.200 3 3.700 3 1.500-.1 2-1 3.800-1s2.300 1 3.800.9c1.600 0 2.600-1.400 3.500-2.900 1.100-1.600 1.600-3.200 1.600-3.300-.1 0-3.100-1.200-3.100-4.600ZM17.100 7.600c.8-1 1.400-2.400 1.200-3.800-1.200.1-2.600.8-3.500 1.800-.8.9-1.400 2.300-1.200 3.700 1.300.1 2.700-.7 3.500-1.700Z" fill="#f4f0ec" /></Apple>
        {MENU.map(([t, w, b]) => <MenuLabel key={t} $w={w} $bold={b}>{t}</MenuLabel>)}
        <MenuSpacer />
        <StatusCell $w={79}><svg width="30" height="34" viewBox="0 0 30 34"><path d="M16 1L29 9 21 20 19 28 14 33 2 22V10Z" fill="#f2ece8" /><path d="M14 33L20 19 22 20" stroke="#5d2a1e" strokeWidth="2" fill="none" /></svg></StatusCell>
        <StatusCell $w={73}><svg width="42" height="36" viewBox="0 0 42 36"><circle cx="18" cy="16" r="14" fill="#c9b9b2" /><circle cx="10" cy="20" r="9" fill="#e8e2de" /><circle cx="30" cy="24" r="11" fill="#f6f2ee" stroke="#4a2020" strokeWidth="2" /><path d="M24 24a6 6 0 0 1 11-3M36 25a6 6 0 0 1-11 3" stroke="#4a2020" strokeWidth="2" fill="none" /></svg></StatusCell>
        <StatusCell $w={77}><svg width="36" height="34" viewBox="0 0 36 34"><rect x="1" y="0" width="9" height="34" rx="4" fill="#f2ece8" /><rect x="14" y="3" width="8" height="20" rx="3" fill="#c8bdb8" /><rect x="26" y="0" width="9" height="34" rx="4" fill="#f2ece8" /></svg></StatusCell>
        <StatusCell $w={76}><svg width="44" height="32" viewBox="0 0 44 32"><rect width="44" height="32" rx="3" fill="#f5f0ec" /><text x="22" y="25" textAnchor="middle" fontSize="24" fontWeight="600" fill="#4a2420" fontFamily="Inter, sans-serif">A</text></svg></StatusCell>
        <StatusCell $w={74}><svg width="30" height="30" viewBox="0 0 30 30"><circle cx="15" cy="15" r="13" fill="none" stroke="#f2ece8" strokeWidth="2.4" /><path d="M11 8l10 7-10 7Z" fill="#f2ece8" /></svg></StatusCell>
        <StatusCell $w={82}><svg width="50" height="24" viewBox="0 0 50 24"><rect x="1" y="1" width="44" height="22" rx="6" fill="none" stroke="#a89c98" strokeWidth="2" /><rect x="4" y="4" width="38" height="16" rx="3.500" fill="#f2ece8" /><path d="M47 8c2 1 2 7 0 8Z" fill="#a89c98" /></svg></StatusCell>
        <StatusCell $w={70}><svg width="34" height="26" viewBox="0 0 34 26"><path d="M2 9a22 22 0 0 1 30 0M7 14a15 15 0 0 1 20 0" stroke="#f4f0ec" strokeWidth="3.500" fill="none" /><path d="M11 18a9 9 0 0 1 12 0L17 26Z" fill="#f4f0ec" /></svg></StatusCell>
        <StatusCell $w={59}><svg width="26" height="28" viewBox="0 0 26 28"><circle cx="11" cy="11" r="9" fill="none" stroke="#f2ece8" strokeWidth="2.600" /><path d="M17 18l7 9" stroke="#f2ece8" strokeWidth="2.800" /></svg></StatusCell>
        <StatusCell $w={75}><svg width="30" height="28" viewBox="0 0 30 28"><rect x="1" y="1" width="28" height="12" rx="6" fill="none" stroke="#f2ece8" strokeWidth="2" /><circle cx="8" cy="7" r="3.500" fill="#f2ece8" /><rect y="15" width="30" height="13" rx="6.500" fill="#f2ece8" /><circle cx="22" cy="21.500" r="3.500" fill="#4a2a2a" /></svg></StatusCell>
        <StatusCell $w={52}><svg width="28" height="28" viewBox="0 0 28 28"><defs><radialGradient id="siri"><stop offset="0" stopColor="#e6e0f0" /><stop offset=".5" stopColor="#a04a90" /><stop offset="1" stopColor="#2f8a8a" /></radialGradient></defs><circle cx="14" cy="14" r="14" fill="url(#siri)" /></svg></StatusCell>
        <Clock $w={149}>Mon 8 May</Clock>
        <Clock $w={104} $wide>17:04</Clock>
      </MenuBar>

      <Shell>
        <Chrome>
          <TabStrip>
            <Lights><Light $c="#ee6a5f" /><Light $c="#f5bf4f" /><Light $c="#61c454" /></Lights>
            <Tab $w={478}><ApexFav bg="#4e7486" /><TabTitle>List Details</TabTitle><TabX viewBox="0 0 16 18"><X /></TabX></Tab>
            <Tab $w={480} $active><ApexFav bg="#a5a8ac" /><TabTitle>Employee Grid</TabTitle><TabX viewBox="0 0 16 18"><X /></TabX></Tab>
            <Tab $w={476} $sep>
              <TabIcon viewBox="0 0 32 32"><path d="M2 0L30 18 3 32Z" fill="#e0587a" /><path d="M0 9L11 16 0 24Z" fill="#7a1a3a" /><path d="M3 32L30 18H13Z" fill="#ad2f4e" /></TabIcon>
              <TabTitle $fade>DSA Assessment 2-202305</TabTitle>
              <svg width="22" height="30" viewBox="0 0 22 30"><path d="M1 10h5l8-6v22l-8-6H1Z" fill="#fff" /><path d="M18 11v8" stroke="#fff" strokeWidth="2" /></svg>
              <TabX viewBox="0 0 16 18"><X /></TabX>
            </Tab>
            <Tab $w={478} $sep>
              <TabIcon viewBox="0 0 32 32"><path d="M4 6C14 0 30 6 29 20c0 4-1 8-3 11" fill="none" stroke="#6d5ea8" strokeWidth="4" /></TabIcon>
              <TabTitle>Blackboard Learn</TabTitle>
              <TabX viewBox="0 0 16 18"><X /></TabX>
            </Tab>
            <Plus viewBox="0 0 26 26"><path d="M13 1v24M1 13h24" stroke="#fff" strokeWidth="3.600" /></Plus>
            <StripEnd viewBox="0 0 20 14"><path d="M2 1l8 12 8-12" fill="none" stroke="#fff" strokeWidth="2.600" /></StripEnd>
          </TabStrip>

          <Toolbar>
            <NavBtn viewBox="0 0 32 32"><path d="M29 16H4M14 5L3 16l11 11" fill="none" stroke="#fff" strokeWidth="3" /></NavBtn>
            <NavBtn viewBox="0 0 32 32"><path d="M3 16h25M18 5l11 11-11 11" fill="none" stroke="#a994c9" strokeWidth="3" /></NavBtn>
            <NavBtn viewBox="0 0 32 32"><path d="M26 10A12 12 0 1 0 28 18M27 3v9h-9" fill="none" stroke="#fff" strokeWidth="3" /></NavBtn>
            <UrlBar>
              <svg width="18" height="24" viewBox="0 0 18 24"><rect y="9" width="18" height="15" rx="2" fill="#c6c7ca" /><path d="M4 10V6a5 5 0 0 1 10 0v4" fill="none" stroke="#c6c7ca" strokeWidth="2.400" /></svg>
              <UrlText><UrlHost>aet-oracle5.aet.leedsbeckett.ac.uk</UrlHost>:8443/ords/c7302796/r/a2-rac-hr/employee-grid?session=2673398631717</UrlText>
              <UrlIcon viewBox="0 0 32 36"><path d="M11 14H6v20h20V14h-5M16 24V2M10 8l6-6 6 6" fill="none" stroke="#c6c7ca" strokeWidth="2.400" /></UrlIcon>
              <UrlIcon viewBox="0 0 32 36"><path d="M16 3l4 11h11l-9 7 3 12-9-7-9 7 3-12-9-7h11Z" fill="none" stroke="#c6c7ca" strokeWidth="2.600" /></UrlIcon>
            </UrlBar>
            <ExtRow>
              <Ext viewBox="0 0 32 32"><rect width="32" height="32" fill="#d2353a" /><circle cx="9" cy="11" r="3" fill="#fff" /><circle cx="23" cy="11" r="3" fill="#fff" /><circle cx="16" cy="14" r="3" fill="#fff" /><path d="M7 24v-6a2 2 0 0 1 4 0v6M14 24v-4a2 2 0 0 1 4 0v4M21 24v-6a2 2 0 0 1 4 0v6" stroke="#fff" strokeWidth="2.400" fill="none" /></Ext>
              <Ext viewBox="0 0 32 32"><path d="M11 6h4V3a3 3 0 0 1 6 0v3h7v8h-3a3.500 3.500 0 0 0 0 7h3v8H19v-3a3.500 3.500 0 0 0-7 0v3H4v-8h3a3.500 3.500 0 0 0 0-7H4V6Z" fill="#fff" /></Ext>
              <Ext viewBox="0 0 32 32"><path d="M1 5h18M1 13h18M1 21h12" stroke="#fff" strokeWidth="3" /><path d="M24 24V3h7" stroke="#fff" strokeWidth="3" fill="none" /><circle cx="21" cy="26" r="4.500" fill="#fff" /></Ext>
              <Ext viewBox="0 0 32 32"><rect x="2" y="0" width="28" height="32" fill="#fff" /><rect x="8" y="5" width="16" height="22" fill="#68439a" /></Ext>
            </ExtRow>
            <Paused><Avatar>A</Avatar>Paused</Paused>
            <Kebab viewBox="0 0 10 36"><circle cx="5" cy="4" r="3.500" fill="#fff" /><circle cx="5" cy="18" r="3.500" fill="#fff" /><circle cx="5" cy="32" r="3.500" fill="#fff" /></Kebab>
          </Toolbar>

          <AppHeader>
            <MenuBtn><svg width="32" height="24" viewBox="0 0 32 24"><path d="M1 3h22M1 12h31M1 21h16" stroke="#fff" strokeWidth="3.400" strokeLinecap="round" /></svg></MenuBtn>
            <AppTitle>A2_RAC_HR</AppTitle>
            <UserBox>
              <svg width="26" height="30" viewBox="0 0 26 30"><circle cx="13" cy="10" r="8" fill="none" stroke="#fff" strokeWidth="2" /><path d="M1 29v-3c0-5 4-6 8-8M25 29v-3c0-5-4-6-8-8" fill="none" stroke="#fff" strokeWidth="2" /></svg>
              c7302796
              <Down w={19} c="#fff" />
            </UserBox>
          </AppHeader>

          <Body>
            <Sidebar>
              <NavTop><Gauge /><NavLabel>DASHBOARD</NavLabel></NavTop>
              <NavTop><ZipDoc /><NavLabel>OVERVIEW</NavLabel><ChevRight viewBox="0 0 12 20"><path d="M1 1l10 9-10 9" fill="none" stroke="#7c8086" strokeWidth="1.800" /></ChevRight></NavTop>
              <NavGroup>
                <NavHead><Book /><NavLabel>REPORTS</NavLabel><Down w={18} c="#7c8086" sw={1.8} /></NavHead>
                <NavSub $on><DocSmall />EMPLOYEE GRID REPORT</NavSub>
                <NavSub><Contact />SALARIED STAFF DETAILS</NavSub>
                <NavSub><Contact solid />HOURLY STAFF DETAILS</NavSub>
                <NavSub><Card />EMPLOYEE CARDS</NavSub>
                <NavSub><Magnify />COLUMN REPORT PER STAFF …</NavSub>
                <NavSub><Xls />EMPLOYEE REPORT</NavSub>
              </NavGroup>
              <NavTop $top $h={90}><AdminIcon /><NavLabel>Administration</NavLabel></NavTop>
            </Sidebar>

            <Main>
              <Grid>
                <GridBar>
                  <SearchGroup>
                    <SearchBtn><Search size={40} strokeWidth={1.2} /><Down w={19} /></SearchBtn>
                    <SearchHint>Search: All Text Columns</SearchHint>
                    <GoBtn>Go</GoBtn>
                  </SearchGroup>
                  <BarSep />
                  <ActionsBtn>Actions<Down w={19} /></ActionsBtn>
                  <BarSep />
                  <BarSpacer />
                  <ResetBtn>
                    <ResetIcon viewBox="0 0 30 30" fill="none" stroke="#a4a4a4" strokeWidth="2"><path d="M27 8V3a2 2 0 0 0-2-2H3a2 2 0 0 0-2 2v24a2 2 0 0 0 2 2h22a2 2 0 0 0 2-2v-2" /><path d="M14 8l-7 6 7 6M7 14h14c8 0 8 12 0 12H10" /></ResetIcon>
                    Reset
                  </ResetBtn>
                </GridBar>
                <Table>
                  <Row $head>
                    <Cell>Name</Cell><Cell $right>Salary(£)</Cell><Cell $right>Hourly Rates(£)</Cell><Cell $end>Staff Category</Cell>
                  </Row>
                  {ROWS.map((r, i) => (
                    <Row key={r[0]} $last={i === ROWS.length - 1}>
                      <Cell>{r[0]}</Cell><Cell $right>{r[1]}</Cell><Cell $right>{r[2]}</Cell><Cell $end>{r[3]}</Cell>
                    </Row>
                  ))}
                </Table>
                <GridFooter>Total 20</GridFooter>
              </Grid>
              <MainSpacer />
              <PageFoot />
            </Main>

            <DevBar>
              {DEV.map(([I, t, w], i) => (
                <DevItem key={i} $w={w}><I size={36} strokeWidth={1.3} />{t}</DevItem>
              ))}
            </DevBar>
          </Body>

          <Shelf>
            <Ring viewBox="0 0 54 54">
              <circle cx="27" cy="27" r="24.500" fill="none" stroke="#7d68b8" strokeWidth="4" />
              <path d="M27 2.500A24.500 24.500 0 0 1 27 51.500" fill="none" stroke="#8ab4f8" strokeWidth="4" />
              <path d="M17 13h15l6 6v23H17Z" fill="#f4f4f4" /><circle cx="27" cy="27" r="7" fill="#4a4f58" /><circle cx="27" cy="27" r="3.500" fill="#5aa0e0" />
            </Ring>
            <FileBox><FileName>DSA Assessme....mp4</FileName><FileInfo>21.7/42.3 MB, 17 secs left</FileInfo></FileBox>
            <Caret viewBox="0 0 20 14"><path d="M2 13l8-11 8 11" fill="none" stroke="#fff" strokeWidth="2.800" /></Caret>
            <ShelfSep />
            <ShelfSpacer />
            <ShowAll>Show all</ShowAll>
            <ShelfX viewBox="0 0 18 20"><path d="M2 2l14 16M16 2L2 18" stroke="#fff" strokeWidth="2.800" /></ShelfX>
          </Shelf>
        </Chrome>
      </Shell>

      <Dock>
        {DOCK.map(([art, on], i) => (
          <DockCell key={i}><DockArt viewBox="0 0 92 92">{art}</DockArt><Dot $on={on} $tone={i < 12 ? (i > 8 ? "#c59ab0" : "#9a9da2") : "#c59ab0"} /></DockCell>
        ))}
        <DockSep />
        {DOCK2.map(([art], i) => (
          <DockCell key={i}><DockArt viewBox="0 0 92 92">{art}</DockArt><Dot $on $tone="#d09ab0" /></DockCell>
        ))}
        <DockSep />
        {DOCK3.map(([art], i) => (
          <DockCell key={i}>
            <DockArt viewBox="0 0 92 92">{art}</DockArt>
            {i === 0 ? <DocBar><DocBarFill /></DocBar> : <Dot />}
          </DockCell>
        ))}
      </Dock>
    </Screen>
  );
}
